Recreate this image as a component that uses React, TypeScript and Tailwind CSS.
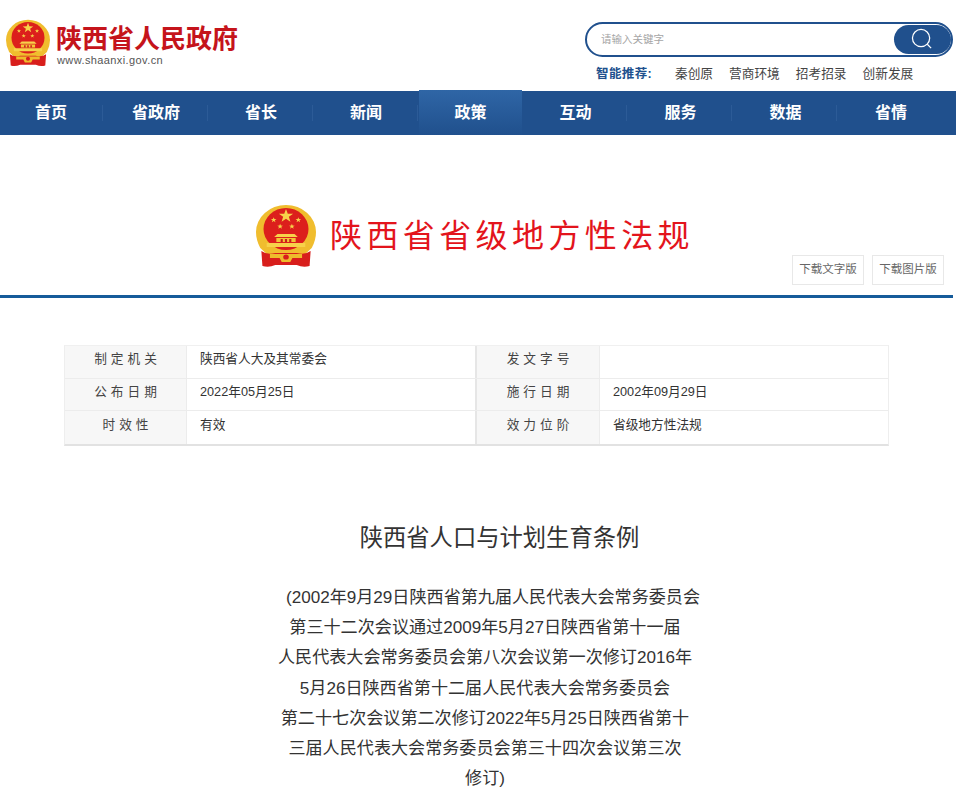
const fonts = "font-['Liberation_Sans','Noto_Sans_CJK_SC',sans-serif]";

const navItems = ["首页", "省政府", "省长", "新闻", "政策", "互动", "服务", "数据", "省情"];
const hotLinks = ["秦创原", "营商环境", "招考招录", "创新发展"];

function starPoints(cx: number, cy: number, r: number) {
  const pts: string[] = [];
  for (let i = 0; i < 10; i++) {
    const rad = i % 2 === 0 ? r : r * 0.4;
    const a = -Math.PI / 2 + (i * Math.PI) / 5;
    pts.push(`${cx + rad * Math.cos(a)},${cy + rad * Math.sin(a)}`);
  }
  return pts.join(" ");
}

function Emblem({ className }: { className: string }) {
  return (
    <svg viewBox="2 0 56 64" preserveAspectRatio="none" className={className}>
      <path d="M6 44 Q2 36 2 28 A28 27 0 0 1 58 28 Q58 36 54 44 L46 52 H14 Z" fill="#f0bd2e" />
      <circle cx="30" cy="25" r="21" fill="#dc1f1c" />
      <polygon points={starPoints(30, 12, 7)} fill="#f7d24a" />
      <polygon points={starPoints(18.5, 16, 2.8)} fill="#f7d24a" />
      <polygon points={starPoints(24.5, 22.5, 2.8)} fill="#f7d24a" />
      <polygon points={starPoints(35.5, 22.5, 2.8)} fill="#f7d24a" />
      <polygon points={starPoints(41.5, 16, 2.8)} fill="#f7d24a" />
      <path d="M22 30 H38 L41 33 H19 Z" fill="#f7d24a" />
      <rect x="21" y="34" width="18" height="4" fill="#f2c636" />
      <path d="M12 39 H48 V43 H12 Z" fill="#f7d24a" />
      <path d="M25 35 h2 v3 h-2 Z M29 35 h2 v3 h-2 Z M33 35 h2 v3 h-2 Z" fill="#c9201c" />
      <path d="M7 47 Q12 51 20 49 H40 Q48 51 53 47 L52 62 Q46 64 40 61 H20 Q14 64 8 62 Z" fill="#d81e1c" />
      <path d="M15 50 H45 V54 H36 L34 58 H26 L24 54 H15 Z" fill="#eebb2c" />
      <circle cx="30" cy="53" r="2.6" fill="#d81e1c" />
    </svg>
  );
}

function Cell({ label, value, last }: { label: string; value: string; last?: boolean }) {
  return (
    <>
      <div className="flex items-center justify-center bg-[#f7f7f7] border-r border-[#ececec] pb-[4px] pl-[4px] text-[12.7px] tracking-[4px] text-[#444]">
        {label}
      </div>
      <div className={`flex items-center pb-[4px] pl-[13px] text-[12.7px] text-[#333] ${last ? "" : "border-r-2 border-[#e6e6e6]"}`}>
        {value}
      </div>
    </>
  );
}

const rows = [
  ["制定机关", "陕西省人大及其常委会", "发文字号", ""],
  ["公布日期", "2022年05月25日", "施行日期", "2002年09月29日"],
  ["时效性", "有效", "效力位阶", "省级地方性法规"],
];

export default function App() {
  return (
    <div className={`w-[956px] h-[804px] overflow-hidden bg-white ${fonts}`}>
      {/* top header */}
      <div className="flex h-[91px] justify-between">
        <div className="flex pl-[6px] pt-[19px]">
          <Emblem className="w-[44px] h-[48px]" />
          <div className="ml-[6px] pt-[3px]">
            <div className="text-[26px] leading-[34px] font-bold text-[#c5141b]">陕西省人民政府</div>
            <div className="-mt-[3px] text-[11px] leading-[14px] tracking-[0.4px] pl-px text-[#555]">
              www.shaanxi.gov.cn
            </div>
          </div>
        </div>
        <div className="w-[371px] pt-[22px]">
          <div className="flex h-[35px] w-[368px] items-center justify-between rounded-full border-2 border-[#20508d] pl-[14px]">
            <span className="text-[10.5px] text-[#a5a5a5]">请输入关键字</span>
            <span className="flex h-[29px] w-[57px] items-center justify-center rounded-full bg-[#20508d]">
              <svg viewBox="0 0 24 24" className="h-[23px] w-[23px]" fill="none" stroke="#fff" strokeWidth="1.3">
                <circle cx="10.5" cy="10.5" r="9" />
                <path d="M17 17 L21 21" />
              </svg>
            </span>
          </div>
          <div className="mt-[8px] flex items-center pl-[11px] text-[12.7px] leading-[18px] text-[#444]">
            <span className="w-[79px] text-[12.5px] font-bold tracking-[0.4px] text-[#20508d]">智能推荐:</span>
            <div className="flex gap-[16px]">
              {hotLinks.map((t) => (
                <span key={t}>{t}</span>
              ))}
            </div>
          </div>
        </div>
      </div>

      {/* main navigation */}
      <div className="flex h-[44px] bg-[#20508d] text-[16px] font-bold text-white">
        {navItems.map((t, i) =>
          i === 4 ? (
            <div
              key={t}
              className="-mt-px ml-px flex h-[45px] w-[103px] items-center justify-center bg-gradient-to-b from-[#2f66a6] to-[#20508d]"
            >
              {t}
            </div>
          ) : (
            <div key={t} className={`flex items-center ${i === 0 ? "w-[103px]" : "w-[105px]"} ${i === 0 ? "" : i < 4 ? "pl-[2px]" : "pl-[3px]"}`}>
              <span className="flex-1 text-center">{t}</span>
              {i < 8 && <span className="h-[16px] w-px bg-[#2c5b97]" />}
            </div>
          )
        )}
      </div>

      {/* document heading */}
      <div className="flex h-[163px] w-[953px] border-b-[3px] border-[#155b9a] pl-[256px]">
        <div className="mt-[69px] flex h-[64px] items-center">
          <Emblem className="h-[64px] w-[60px]" />
          <h1 className="ml-[14px] text-[32px] leading-[40px] tracking-[4.4px] text-[#e3141c]">陕西省省级地方性法规</h1>
        </div>
        <div className="ml-auto mr-[9px] mt-[120px] flex h-[30px] gap-[8px]">
          <span className="flex w-[72px] items-center justify-center border border-[#e8e8e8] text-[11.5px] text-[#666]">下载文字版</span>
          <span className="flex w-[72px] items-center justify-center border border-[#e8e8e8] text-[11.5px] text-[#666]">下载图片版</span>
        </div>
      </div>

      {/* info table */}
      <div className="mx-[64px] mt-[47px] grid h-[101px] w-[825px] grid-cols-[122px_290px_123px_288px] grid-rows-3 border border-t-[#f0f0f0] border-x-[#eeeeee] border-b-2 border-b-[#e2e2e2]">
        {rows.map((r, i) => (
          <div key={r[0]} className={`col-span-4 grid grid-cols-subgrid ${i < 2 ? "border-b border-[#ececec]" : ""}`}>
            <Cell label={r[0]} value={r[1]} />
            <Cell label={r[2]} value={r[3]} last />
          </div>
        ))}
      </div>

      {/* article */}
      <h2 className="mt-[75px] w-[999px] text-center text-[23.3px] leading-[34px] text-[#333]">陕西省人口与计划生育条例</h2>
      <p className="mt-[28px] w-[970px] text-center text-[17.1px] leading-[30.2px] text-[#333]">
        <span className="pl-[16px]">(2002年9月29日陕西省第九届人民代表大会常务委员会</span>
        <br />
        第三十二次会议通过2009年5月27日陕西省第十一届
        <br />
        人民代表大会常务委员会第八次会议第一次修订2016年
        <br />
        5月26日陕西省第十二届人民代表大会常务委员会
        <br />
        第二十七次会议第二次修订2022年5月25日陕西省第十
        <br />
        三届人民代表大会常务委员会第三十四次会议第三次
        <br />
        修订)
      </p>
    </div>
  );
}
